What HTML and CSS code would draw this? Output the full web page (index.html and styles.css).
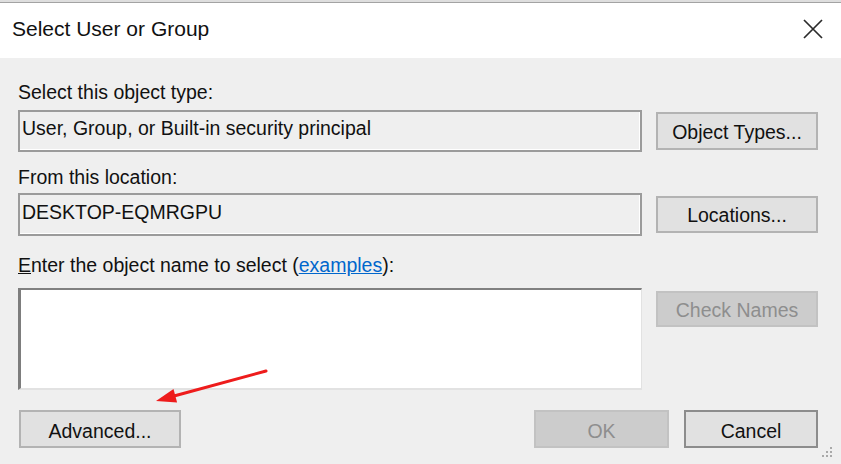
FILE: index.html
```html
<!DOCTYPE html>
<html>
<head>
<meta charset="utf-8">
<title>Select User or Group</title>
<link rel="stylesheet" href="styles.css">
</head>
<body>
<div class="dialog">
  <div class="topedge"></div>
  <div class="titlebar">
    <span class="title">Select User or Group</span>
    <svg class="close" width="20" height="20" viewBox="0 0 20 20"><path d="M1 1 L19 19 M19 1 L1 19" stroke="#2b2b2b" stroke-width="1.7" fill="none"/></svg>
  </div>
  <div class="content">
    <div class="label l1">Select this object type:</div>
    <div class="row r1">
      <div class="field f1">User, Group, or Built-in security principal</div>
      <div class="btn b1">Object Types...</div>
    </div>
    <div class="label l2">From this location:</div>
    <div class="row r2">
      <div class="field f2">DESKTOP-EQMRGPU</div>
      <div class="btn b2">Locations...</div>
    </div>
    <div class="label l3"><span class="ul">E</span>nter the object name to select (<a class="link">examples</a>):</div>
    <div class="row r3">
      <div class="textarea"></div>
      <div class="btn disabled check">Check Names</div>
    </div>
    <div class="footer">
      <div class="btn adv">Advanced...</div>
      <div class="spacer"></div>
      <div class="btn disabled ok">OK</div>
      <div class="btn cancel">Cancel</div>
    </div>
  </div>
  <svg class="arrow" width="841" height="464" viewBox="0 0 841 464">
    <line x1="266" y1="371" x2="174" y2="396" stroke="#ee1c1c" stroke-width="3" stroke-linecap="round"/>
    <polygon points="156,401 173.5,388.9 177.1,402.5" fill="#ee1c1c"/>
  </svg>
  <svg class="grip" width="14" height="14" viewBox="0 0 14 14">
    <rect x="10" y="2" width="2" height="2" fill="#a9a9a9"/>
    <rect x="6" y="6" width="2" height="2" fill="#a9a9a9"/>
    <rect x="10" y="6" width="2" height="2" fill="#a9a9a9"/>
    <rect x="2" y="10" width="2" height="2" fill="#a9a9a9"/>
    <rect x="6" y="10" width="2" height="2" fill="#a9a9a9"/>
    <rect x="10" y="10" width="2" height="2" fill="#a9a9a9"/>
  </svg>
</div>
</body>
</html>
```

FILE: styles.css
```css
html, body {
  margin: 0;
  padding: 0;
}
body {
  background: #efefef;
  font-family: "Liberation Sans", Arial, sans-serif;
  color: #111;
}
.dialog {
  position: relative;
  width: 841px;
  height: 464px;
  overflow: hidden;
  background: #efefef;
}
.topedge {
  height: 2px;
  background: #dedede;
  border-bottom: 1px solid #a3a3a3;
}
.titlebar {
  height: 55px;
  box-sizing: border-box;
  background: #ffffff;
  display: flex;
  align-items: center;
  padding: 0 18px 3px 12px;
}
.title {
  font-size: 21px;
  line-height: 26px;
  color: #111;
}
.close {
  margin-left: auto;
  margin-top: 0;
}
.content {
  padding: 0 23px 0 18px;
  font-size: 19.5px;
}
.label {
  line-height: 24px;
  white-space: nowrap;
}
.l1 { margin-top: 22px; }
.l2 { margin-top: 13px; }
.l3 { margin-top: 17px; }
.ul { text-decoration: underline; }
.link {
  color: #0066cc;
  text-decoration: underline;
}
.row {
  display: flex;
  align-items: center;
  gap: 14px;
}
.r1 { margin-top: 6px; }
.r2 { margin-top: 4px; }
.r3 { margin-top: 11px; align-items: flex-start; }
.field {
  flex: 1;
  box-sizing: border-box;
  border: 2px solid #9b9b9b;
  box-shadow: inset -1px -1px 0 #ffffff;
  background: #efefef;
  padding: 4px 0 0 2px;
  line-height: 24px;
  white-space: nowrap;
}
.f1 { height: 42px; }
.f2 { height: 43px; padding-top: 5px; }
.btn {
  box-sizing: border-box;
  width: 162px;
  background: #e1e1e1;
  border: 2px solid #b3b3b3;
  display: flex;
  align-items: center;
  justify-content: center;
  padding-top: 2px;
  color: #111;
  white-space: nowrap;
}
.b1 { height: 38px; }
.b2 { height: 37px; }
.textarea {
  flex: 1;
  height: 102px;
  box-sizing: border-box;
  background: #ffffff;
  border-top: 2px solid #808080;
  border-left: 3px solid #7d7d7d;
  border-right: 1px solid #e2e2e2;
  border-bottom: 2px solid #e2e2e2;
}
.btn.disabled {
  background: #cccccc;
  border-color: #c2c2c2;
  color: #8e8e8e;
}
.check {
  height: 36px;
  margin-top: 3px;
}
.footer {
  margin-top: 20px;
  display: flex;
  align-items: center;
}
.footer .btn {
  height: 38px;
  padding-top: 4px;
}
.adv { margin-left: 1px; }
.spacer { flex: 1; }
.footer .ok { width: 135px; }
.footer .cancel {
  width: 134px;
  margin-left: 15px;
  border-color: #8c8c8c;
}
.arrow {
  position: absolute;
  left: 0;
  top: 0;
  pointer-events: none;
}
.grip {
  position: absolute;
  right: 7px;
  bottom: 5px;
}
```
